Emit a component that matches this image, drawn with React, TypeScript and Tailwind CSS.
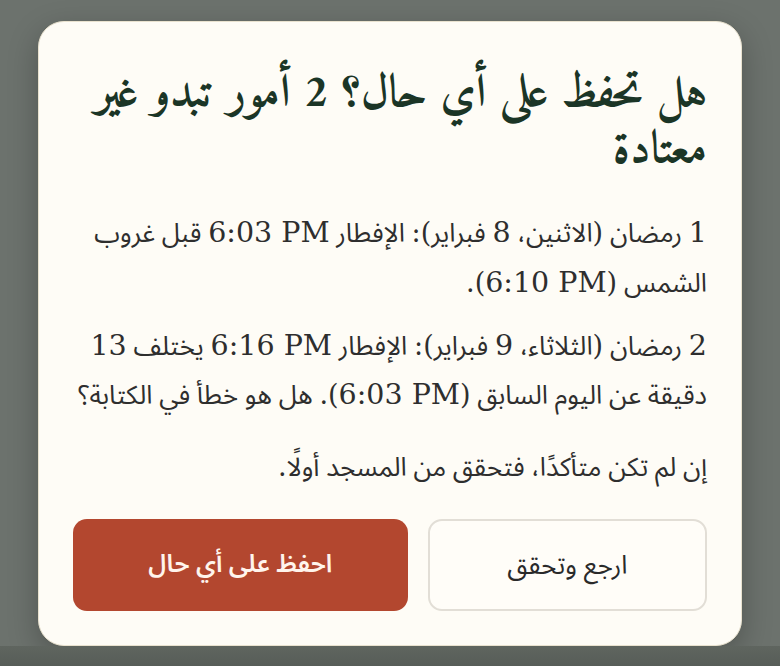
import React from "react";

const body = '"Noto Sans Arabic", "DejaVu Sans", sans-serif';
const latin = '"DejaVu Serif", "Liberation Serif", serif';
const title = '"Amiri", "Noto Naskh Arabic", serif';

function L({ children }: { children: React.ReactNode }) {
  return (
    <span
      dir="ltr"
      className="text-[28.5px] whitespace-nowrap"
      style={{ unicodeBidi: "isolate", fontFamily: latin }}
    >
      {children}
    </span>
  );
}

function S({ children }: { children: React.ReactNode }) {
  return (
    <span className="text-[27px]" style={{ fontFamily: latin }}>
      {children}
    </span>
  );
}

export default function App() {
  return (
    <div className="w-[780px] h-[666px] bg-[#6c726d] flex flex-col overflow-hidden" dir="rtl">
      <div className="mx-[38px] mt-[21px] w-[704px] h-[625px] shrink-0 rounded-[26px] bg-[#fefcf6] border border-[#e9e2cf] shadow-[0_10px_30px_rgba(0,0,0,0.25)] px-[34px] pt-[45px] pb-[34px] flex flex-col">
        <h1
          className="text-[46px] leading-[56px] font-bold text-[#1b3526] text-right"
          style={{ fontFamily: title }}
        >
          هل تحفظ على أي حال؟ 2 أمور تبدو غير معتادة
        </h1>
        <div
          className="mt-[29px] text-[26px] text-[#2e2e2e] text-right"
          style={{ fontFamily: body }}
        >
          <p className="leading-[49px]">
            <L>1</L> رمضان <S>(</S>الاثنين، <L>8</L> فبراير<S>):</S> الإفطار <L>6:03 PM</L> قبل غروب الشمس <S>(</S><L>6:10 PM</L><S>).</S>
          </p>
          <p className="leading-[48px] mt-[14px]">
            <L>2</L> رمضان <S>(</S>الثلاثاء، <L>9</L> فبراير<S>):</S> الإفطار <L>6:16 PM</L> يختلف <L>13</L> دقيقة عن اليوم السابق <S>(</S><L>6:03 PM</L><S>).</S> هل هو خطأ في الكتابة؟
          </p>
          <p className="leading-[48px] mt-[23px]">
            إن لم تكن متأكدًا، فتحقق من المسجد أولًا<S>.</S>
          </p>
        </div>
        <div className="mt-auto flex gap-[20px] h-[92px]">
          <button
            className="flex-[278] rounded-[14px] border-2 border-[#e2ded6] bg-[#fffdf8] text-[26px] text-[#2a2a2a]"
            style={{ fontFamily: body }}
          >
            ارجع وتحقق
          </button>
          <button
            className="flex-[338] rounded-[14px] bg-[#b3472f] text-[25px] font-semibold text-[#fff4ec]"
            style={{ fontFamily: body }}
          >
            احفظ على أي حال
          </button>
        </div>
      </div>
      <div className="flex-1 bg-gradient-to-b from-[#5f655f] to-[#575d58]" />
    </div>
  );
}
